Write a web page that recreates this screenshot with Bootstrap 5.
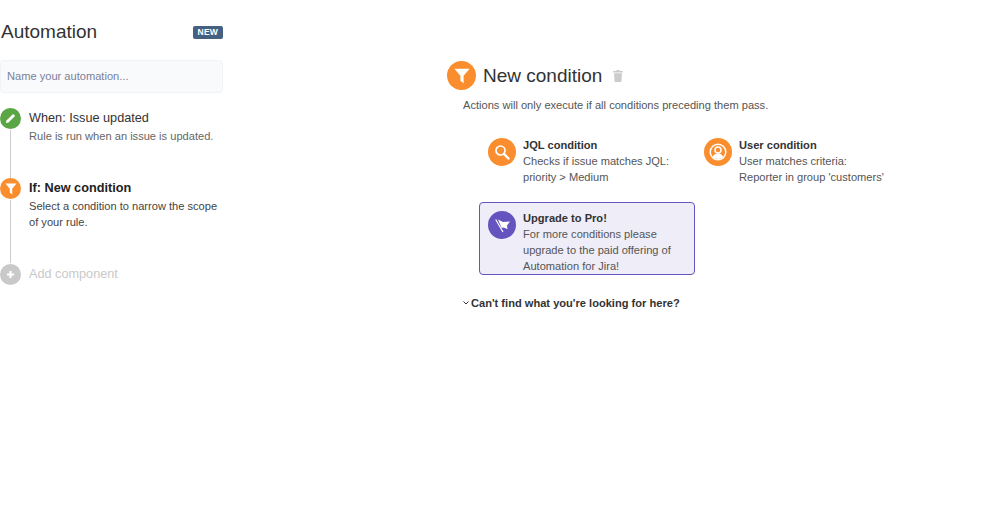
<!DOCTYPE html>
<html lang="en">
<head>
    <title>Automation</title>
    <meta charset="utf-8">
    <meta name="viewport" content="width=device-width, initial-scale=1">
    <link href="https://cdn.jsdelivr.net/npm/bootstrap@5.3.0/dist/css/bootstrap.min.css" rel="stylesheet">
    <script src="https://cdn.jsdelivr.net/npm/bootstrap@5.3.0/dist/js/bootstrap.bundle.min.js"></script>
    <style>
        body { font-family: "Liberation Sans", Arial, sans-serif; font-size: 11.1px; color: #333; background: #fff; }
        .rule-side { width: 223px; padding-top: 20px; margin-right: 224px; flex: none; }
        .rule-title { font-size: 19px; line-height: 23px; font-weight: 400; color: #333; margin: 0 0 0 1px; }
        .new-tag { background: #456080; color: #fff; font-size: 8.5px; font-weight: 700; line-height: 13px; padding: 0 5px; border-radius: 2px; letter-spacing: .2px; margin-top: 2px; }
        .name-box { height: 33px; margin-top: 17px; background: #f9fafc; border: 1px solid #f2f3f6; border-radius: 4px; color: #7a8199; font-size: 11.1px; padding: 0 6px 2px; width: 100%; display: block; }
        .name-box::placeholder { color: #7a8199; opacity: 1; }
        .step-row { position: relative; padding-left: 29px; }
        .step-row.has-line::before { content: ""; position: absolute; left: 10px; top: 22px; bottom: 0; width: 1px; background: #ccc; }
        .step-dot { position: absolute; left: 0; top: 0; width: 21px; height: 21px; border-radius: 50%; display: flex; align-items: center; justify-content: center; color: #fff; }
        .dot-green { background: #5aa544; }
        .dot-orange { background: #fa8e2e; }
        .dot-grey { background: #c9c9c9; }
        .dot-purple { background: #6554c0; }
        .step-one { height: 70px; margin-top: 15px; }
        .step-two { height: 85px; }
        .step-name { font-size: 12.7px; line-height: 20px; color: #333; }
        .step-note { font-size: 11.1px; line-height: 17px; color: #666; }
        .step-two .step-name { font-weight: 700; color: #222; }
        .step-two .step-note { color: #444; line-height: 16px; }
        .step-off { color: #c9c9c9; margin-top: 1px; }
        .cond-area { padding-top: 61px; width: 460px; flex: none; }
        .cond-icon { width: 29px; height: 29px; border-radius: 50%; background: #fa8e2e; color: #fff; display: flex; align-items: center; justify-content: center; flex: none; }
        .cond-title { font-size: 19px; line-height: 29px; font-weight: 400; color: #333; margin: 0 0 0 7px; }
        .trash-icon { color: #ccc; margin-left: 11px; }
        .cond-desc { margin: 7px 0 0 16px; line-height: 17px; color: #555; }
        .cond-grid { display: grid; grid-template-columns: 216px 216px; margin: 15px 0 0 32px; }
        .cond-item { display: flex; gap: 7px; padding: 7px 8px 0 8px; height: 73px; border: 1px solid transparent; border-radius: 4px; }
        .cond-item.upsell { background: #eeedf8; border-color: #6554c0; }
        .item-icon { width: 28px; height: 28px; border-radius: 50%; display: flex; align-items: center; justify-content: center; color: #fff; flex: none; margin-top: 1px; }
        .item-name { font-weight: 700; line-height: 16px; color: #333; }
        .item-text { line-height: 16px; color: #555; }
        .more-link { margin: 20px 0 0 16px; font-weight: 700; color: #333; line-height: 16px; display: flex; align-items: center; gap: 2px; }
    </style>
</head>
<body>
<div class="d-flex">
    <div class="rule-side">
        <div class="d-flex justify-content-between align-items-center">
            <h1 class="rule-title">Automation</h1>
            <span class="new-tag">NEW</span>
        </div>
        <input class="name-box" type="text" placeholder="Name your automation...">

        <div class="step-row step-one has-line">
            <div class="step-dot dot-green">
                <svg width="11" height="11" viewBox="0 0 12 12"><path d="M1 11l.6-2.8L8.2 1.6a1 1 0 0 1 1.4 0l.8.8a1 1 0 0 1 0 1.4L3.8 10.4z" fill="currentColor"/></svg>
            </div>
            <div class="step-name">When: Issue updated</div>
            <div class="step-note">Rule is run when an issue is updated.</div>
        </div>
        <div class="step-row step-two has-line">
            <div class="step-dot dot-orange">
                <svg width="12" height="12" viewBox="0 0 12 12"><path d="M.5.5h11L7.2 5.8v5.7L4.8 9.5V5.8z" fill="currentColor"/></svg>
            </div>
            <div class="step-name">If: New condition</div>
            <div class="step-note">Select a condition to narrow the scope of your rule.</div>
        </div>
        <div class="step-row">
            <div class="step-dot dot-grey">
                <svg width="9" height="9" viewBox="0 0 10 10"><path d="M5 1v8M1 5h8" stroke="currentColor" stroke-width="2.4" fill="none"/></svg>
            </div>
            <div class="step-name step-off">Add component</div>
        </div>
    </div>

    <div class="cond-area">
        <div class="d-flex align-items-center">
            <div class="cond-icon">
                <svg width="16" height="16" viewBox="0 0 12 12"><path d="M.3.5h11.4L7.2 5.8v5.7L4.8 9.5V5.8z" fill="currentColor"/></svg>
            </div>
            <h2 class="cond-title">New condition</h2>
            <svg class="trash-icon" width="10" height="12" viewBox="0 0 10 12"><path d="M3.5 0h3l.5 1h3v1.4H0V1h3zM1 3.2h8L8.4 12H1.6z" fill="currentColor"/></svg>
        </div>
        <p class="cond-desc">Actions will only execute if all conditions preceding them pass.</p>
        <div class="cond-grid">
            <div class="cond-item">
                <div class="item-icon dot-orange">
                    <svg width="16" height="16" viewBox="0 0 16 16" fill="none" stroke="currentColor"><circle cx="6.5" cy="6.5" r="4.5" stroke-width="1.7"/><path d="M10 10l4.5 4.5" stroke-width="2.4" stroke-linecap="round"/></svg>
                </div>
                <div>
                    <div class="item-name">JQL condition</div>
                    <div class="item-text">Checks if issue matches JQL:<br>priority &gt; Medium</div>
                </div>
            </div>
            <div class="cond-item">
                <div class="item-icon dot-orange">
                    <svg width="18" height="18" viewBox="0 0 18 18"><circle cx="9" cy="9" r="7.8" fill="none" stroke="currentColor" stroke-width="1.5"/><circle cx="9" cy="7" r="3" fill="none" stroke="currentColor" stroke-width="1.5"/><path d="M3.8 14c1-2.6 3-3.4 5.2-3.4s4.2.8 5.2 3.4a7.5 7.5 0 0 1-10.4 0z" fill="currentColor"/></svg>
                </div>
                <div>
                    <div class="item-name">User condition</div>
                    <div class="item-text text-nowrap">User matches criteria:<br>Reporter in group 'customers'</div>
                </div>
            </div>
            <div class="cond-item upsell">
                <div class="item-icon dot-purple">
                    <svg width="28" height="28" viewBox="0 0 28 28"><path d="M10 8.5l5 2.5 7-.5-3 4 .5 3.5-4-1.5-1.8.6z" fill="currentColor"/><path d="M7.7 8.5L15 21" stroke="currentColor" stroke-width="1.2"/></svg>
                </div>
                <div>
                    <div class="item-name">Upgrade to Pro!</div>
                    <div class="item-text">For more conditions please upgrade to the paid offering of Automation for Jira!</div>
                </div>
            </div>
        </div>
        <div class="more-link">
            <svg width="6" height="4" viewBox="0 0 6 4"><path d="M.5.5L3 3 5.5.5" fill="none" stroke="currentColor"/></svg>
            <span>Can't find what you're looking for here?</span>
        </div>
    </div>
</div>
</body>
</html>
